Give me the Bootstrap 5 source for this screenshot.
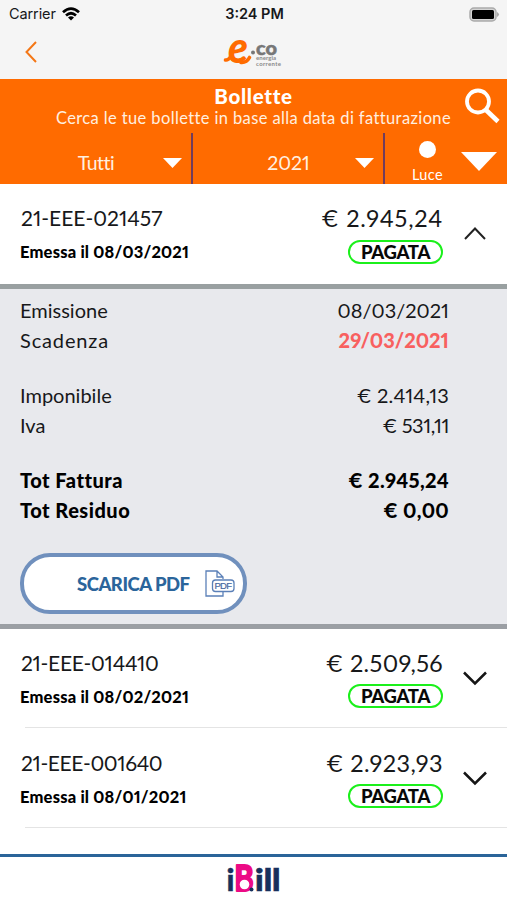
<!DOCTYPE html>
<html lang="it">
<head>
<meta charset="utf-8">
<meta name="viewport" content="width=device-width, initial-scale=1">
<title>Bollette</title>
<link href="https://cdn.jsdelivr.net/npm/bootstrap@5.3.0/dist/css/bootstrap.min.css" rel="stylesheet">
<style>
body{font-family:Lato,"Open Sans",sans-serif;color:#17181a;height:900px;overflow:hidden;font-variant-numeric:proportional-nums;font-variant-ligatures:none}
svg{display:block;flex:none}
.top-area{height:79px;background:#f5f5f5}
.status-bar{height:28px;font:14.5px/28px Inter,sans-serif;padding:0 7px 0 9px}
.carrier{letter-spacing:-.1px}
.side{flex:1 1 0}
.brand-bar{height:51px;padding:0 24px}
.brand-bar .side svg{margin-top:-4px}
.search-area{background:#ff6b00;height:105px;color:#fff}
.ttl{font-size:20.5px;font-weight:900;line-height:24px;letter-spacing:.68px;padding-top:5px}
.sub{font-size:16.5px;line-height:20px;letter-spacing:.38px;color:#fff0e0}
.lens{position:absolute;right:7px;top:9px}
.filters{height:51px;margin-top:5px}
.pick{width:193px;border-right:2px solid #713c5c;padding:9px 9px 0 0;font-size:19.5px;color:#fff0e0}
.pick + .pick{width:192px}
.pick-label{flex:1;text-align:center;padding-left:29px}
.kind{width:76px;font-size:14.5px;line-height:18px;letter-spacing:.4px;padding:8px 0 0 9px}
.dot{width:17px;height:17px;background:#fff}
.bill{height:100px;padding:17px 20px 0 21px}
.bill-mid{height:98px;padding-top:17px}
.bill-last{height:99px;padding-top:18px}
.num{font-size:21px;line-height:34px;white-space:nowrap;letter-spacing:-.4px}
.issued{font-size:16.5px;font-weight:900;line-height:34px;letter-spacing:.19px;color:#000;margin:0 0 0 -1px}
.price{font-size:23.5px;line-height:34px;white-space:nowrap;letter-spacing:.4px}
.pill{width:95px;height:24px;border:2.5px solid #1bf01b;border-radius:12px;font-size:18.5px;font-weight:900;line-height:21px;letter-spacing:-.3px;text-align:center;color:#080808;margin-top:5px}
.bill-mid .pill,.bill-last .pill{margin-top:4px}
.chev{width:24px;margin-left:20px;padding-top:23px}
.rule{height:1px;background:#e4e4e4;margin-left:25px}
.detail{background:#e8e9ed;border-top:5px solid #99a0a1;border-bottom:5px solid #9b9fa4;height:345px;padding:6px 58px 0 20px;font-size:20px;line-height:30px}
.pair{margin-bottom:25px}
.pair.tot{margin-bottom:28px}
.late{color:#f8605f;font-weight:900}
.tot{font-weight:900;letter-spacing:.5px;color:#000}
.tot .d-flex > :last-child{letter-spacing:.3px}
.pdf-btn{width:227px;height:61px;border:4px solid #7090bd;border-radius:30px;background:#fff;color:#2b659b;font-size:18.5px;font-weight:900;letter-spacing:-.5px;padding:0 8px 0 53px}
.foot{border-top:3px solid #2a6499;height:46px}
</style>
</head>
<body class="bg-white">
<header class="top-area">
  <div class="status-bar d-flex align-items-center">
    <div class="side d-flex align-items-center"><span class="carrier">Carrier</span>
      <svg class="ms-1" width="20" height="14" viewBox="-2 0 20 14" fill="none" stroke="#000" stroke-width="2.700"><path d="M1 5.300Q9-2 17 5.300M4 8.500Q9 4 14 8.500"/><path d="M9 13.500 6 10.500Q9 8 12 10.500z" fill="#000" stroke="none"/></svg>
    </div>
    <span class="fw-semibold">3:24 PM</span>
    <div class="side d-flex justify-content-end">
      <svg width="31" height="15" viewBox="0 0 31 15"><rect x="1" y="1" width="26" height="13" rx="4" fill="#d4d4d4" stroke="#aaa" stroke-width="1.500"/><rect x="3" y="3" width="22" height="9" rx="1.500"/><path d="M28 5q4 2.500 0 5z" fill="#aaa"/></svg>
    </div>
  </div>
  <div class="brand-bar d-flex align-items-center">
    <div class="side"><svg width="14" height="22" viewBox="0 0 14 22" fill="none" stroke="#f47716" stroke-width="2"><path d="M12 1 2.500 11 12 21"/></svg></div>
    <svg width="68" height="51" viewBox="-3 -12 68 51">
      <text x="5" y="23" font-family="Lato" font-weight="900" font-style="italic" font-size="43" textLength="20" lengthAdjust="spacingAndGlyphs" fill="#ff6b00">e</text>
      <path d="M2.500 20Q5 20.500 7.500 17M18 22.500Q23.500 23 26.500 17.500" fill="none" stroke="#ff6b00" stroke-width="3.600" stroke-linecap="round"/>
      <circle cx="30" cy="12.500" r="2" fill="#777"/>
      <text x="33" y="14.500" font-family="Lato" font-weight="900" font-size="19" textLength="21" lengthAdjust="spacingAndGlyphs" fill="#777" stroke="#777" stroke-width=".5">co</text>
      <g font-family="Lato" font-weight="700" font-size="6" fill="#888"><text x="33" y="19.500" textLength="20">energia</text><text x="33" y="25.500" textLength="25">corrente</text></g>
    </svg>
    <div class="side"></div>
  </div>
</header>
<section class="search-area position-relative">
  <div class="ttl text-center">Bollette</div>
  <div class="sub text-center">Cerca le tue bollette in base alla data di fatturazione</div>
  <svg class="lens" width="36" height="36" viewBox="0 0 36 36" fill="none" stroke="#fff" stroke-width="3.800"><circle cx="14" cy="13.500" r="11"/><path d="M22 22 34 33.500" stroke-width="4.600"/></svg>
  <div class="filters d-flex">
    <div class="pick d-flex align-items-center"><span class="pick-label" style="letter-spacing:-.5px">Tutti</span><svg width="19" height="10" viewBox="0 0 19 10"><path d="M0 0H19L9.500 10z" fill="#fff"/></svg></div>
    <div class="pick d-flex align-items-center"><span class="pick-label">2021</span><svg width="19" height="10" viewBox="0 0 19 10"><path d="M0 0H19L9.500 10z" fill="#fff"/></svg></div>
    <div class="kind d-flex flex-column align-items-center"><span class="dot rounded-circle mb-2"></span><span>Luce</span></div>
    <svg class="mt-3" width="36" height="23" viewBox="0 0 36 23"><path d="M0 3H36L18 22z" fill="#fff"/></svg>
  </div>
</section>
<main>
  <article class="bill d-flex">
    <div class="flex-grow-1"><div class="num" style="letter-spacing:0">21-EEE-021457</div><div class="issued">Emessa il 08/03/2021</div></div>
    <div class="d-flex flex-column align-items-end"><div class="price" style="letter-spacing:.8px">€ 2.945,24</div><div class="pill">PAGATA</div></div>
    <div class="chev"><svg width="24" height="18" viewBox="0 0 24 18" fill="none" stroke="#222" stroke-width="2"><path d="M2 15 12 4.500 22 15"/></svg></div>
  </article>
  <section class="detail">
    <div class="pair">
      <div class="d-flex justify-content-between"><span>Emissione</span><span>08/03/2021</span></div>
      <div class="d-flex justify-content-between"><span style="letter-spacing:.85px">Scadenza</span><span class="late">29/03/2021</span></div>
    </div>
    <div class="pair">
      <div class="d-flex justify-content-between"><span>Imponibile</span><span style="letter-spacing:.15px">€ 2.414,13</span></div>
      <div class="d-flex justify-content-between"><span>Iva</span><span style="letter-spacing:-.4px">€ 531,11</span></div>
    </div>
    <div class="pair tot">
      <div class="d-flex justify-content-between"><span>Tot Fattura</span><span>€ 2.945,24</span></div>
      <div class="d-flex justify-content-between"><span>Tot Residuo</span><span>€ 0,00</span></div>
    </div>
    <button type="button" class="pdf-btn d-flex align-items-center justify-content-between"><span>SCARICA PDF</span>
      <svg width="30" height="28" viewBox="0 0 30 28" fill="none" stroke="#5b80b8" stroke-width="1.300"><path d="M18 9V7L12 1H1V26H18V22M12 1V7H18"/><rect x="7.500" y="10" width="21.500" height="11.500" rx="3" fill="#fff"/><text x="9.500" y="19.300" font-family="Liberation Sans" font-weight="400" font-size="9.500" textLength="17.500" letter-spacing="0" fill="#47699f" stroke="#47699f" stroke-width=".2">PDF</text></svg>
    </button>
  </section>
  <article class="bill bill-mid d-flex">
    <div class="flex-grow-1"><div class="num" style="letter-spacing:-.3px">21-EEE-014410</div><div class="issued">Emessa il 08/02/2021</div></div>
    <div class="d-flex flex-column align-items-end"><div class="price">€ 2.509,56</div><div class="pill">PAGATA</div></div>
    <div class="chev"><svg width="24" height="20" viewBox="0 0 24 20" fill="none" stroke="#151515" stroke-width="2.500"><path d="M1 3.500 12 14.500 23 3.500"/></svg></div>
  </article>
  <div class="rule"></div>
  <article class="bill bill-last d-flex">
    <div class="flex-grow-1"><div class="num">21-EEE-001640</div><div class="issued">Emessa il 08/01/2021</div></div>
    <div class="d-flex flex-column align-items-end"><div class="price">€ 2.923,93</div><div class="pill">PAGATA</div></div>
    <div class="chev"><svg width="24" height="20" viewBox="0 0 24 20" fill="none" stroke="#151515" stroke-width="2.500"><path d="M1 3.500 12 14.500 23 3.500"/></svg></div>
  </article>
  <div class="rule"></div>
  <div style="height:26px"></div>
</main>
<footer class="foot d-flex justify-content-center">
  <svg width="62" height="43" viewBox="-4 -9 62 43" font-family="Lato" font-weight="900" fill="#16305c">
    <text x="-.5" y="25" font-size="30" textLength="8" lengthAdjust="spacingAndGlyphs" stroke="#16305c" stroke-width=".4">i</text>
    <text x="7.500" y="25" font-size="36" textLength="19" lengthAdjust="spacingAndGlyphs" fill="#ec0a85" stroke="#ec0a85" stroke-width="2" stroke-linejoin="round">B</text>
    <circle cx="17.500" cy="18.500" r="4.800" fill="#fff"/><circle cx="24.500" cy="23.500" r="2"/>
    <text x="28" y="25" font-size="30" textLength="25.500" lengthAdjust="spacingAndGlyphs" stroke="#16305c" stroke-width=".7">ill</text>
  </svg>
</footer>
<script src="https://cdn.jsdelivr.net/npm/bootstrap@5.3.0/dist/js/bootstrap.bundle.min.js"></script>
</body>
</html>
